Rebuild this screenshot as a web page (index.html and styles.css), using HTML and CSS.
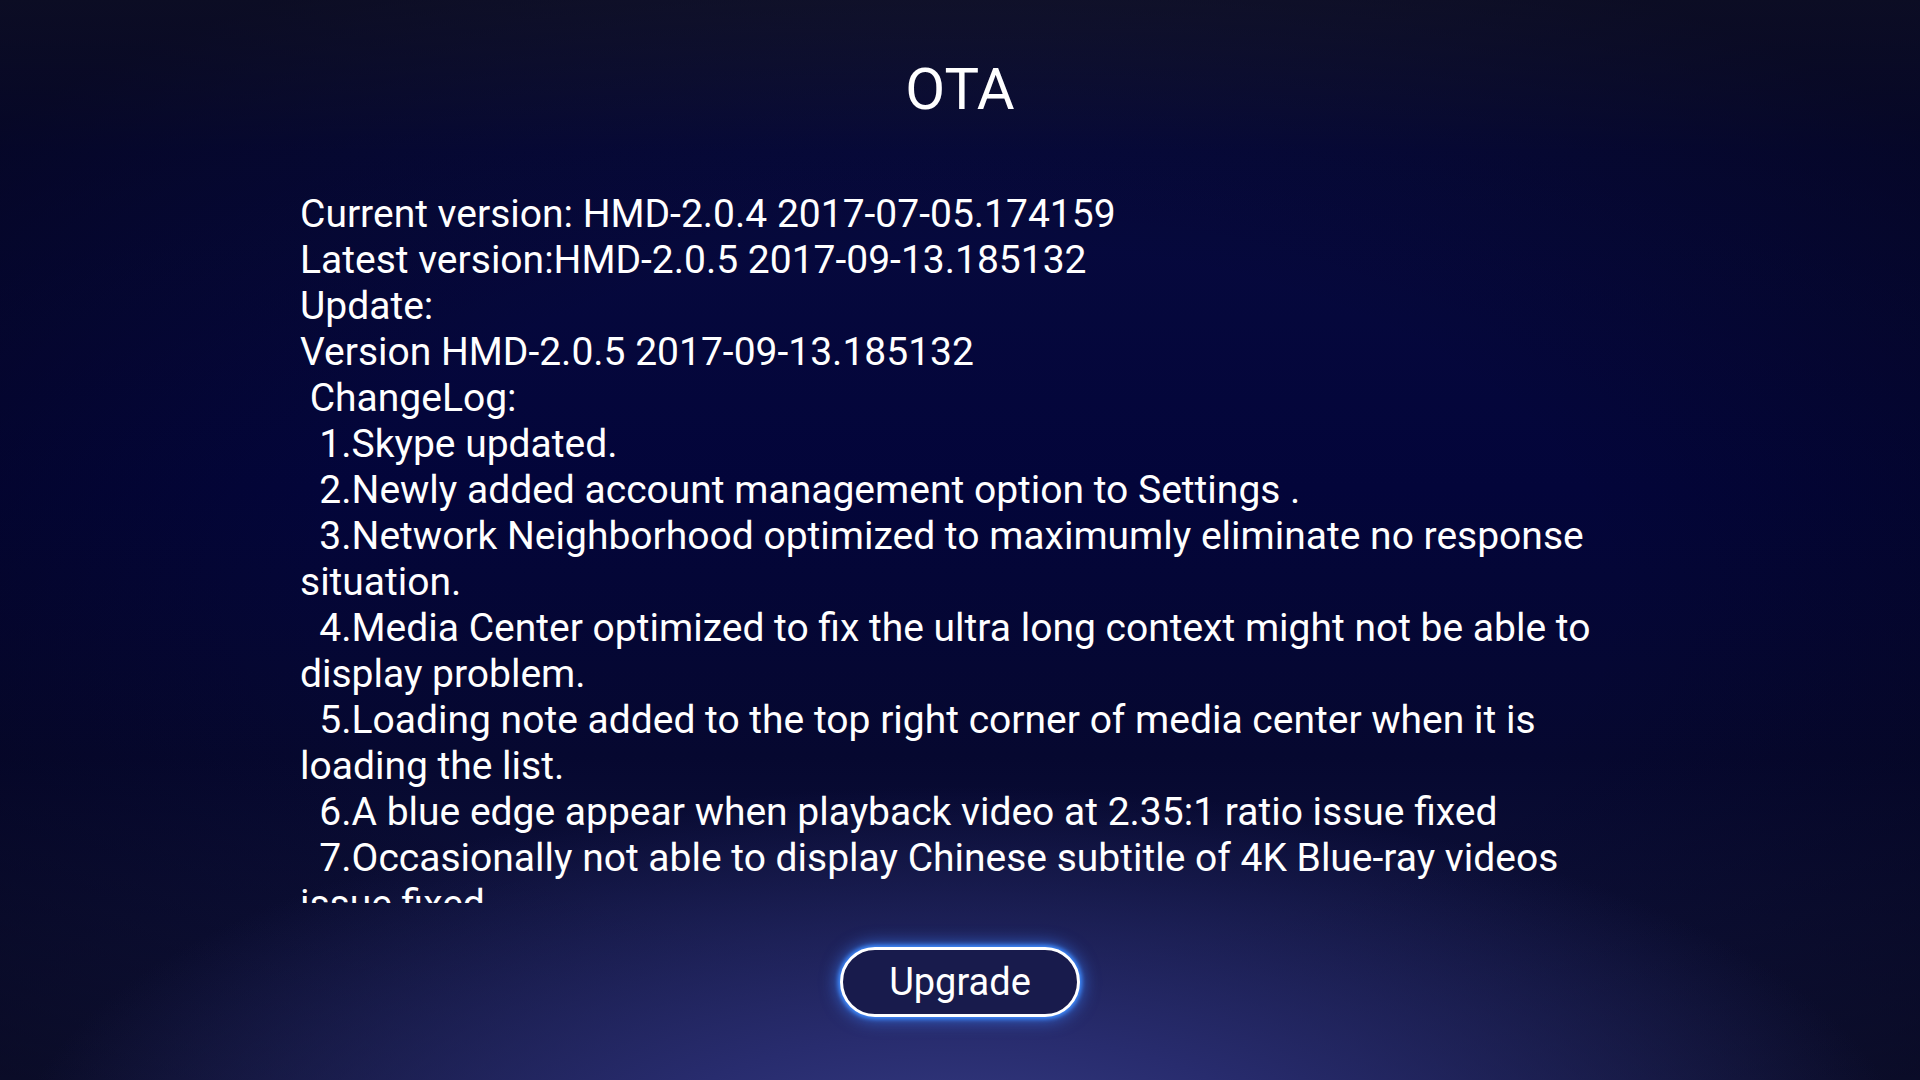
FILE: index.html
```html
<!DOCTYPE html>
<html lang="en">
<head>
  <meta charset="UTF-8" />
  <meta name="viewport" content="width=device-width, initial-scale=1.0" />
  <title>OTA</title>
  <link rel="stylesheet" href="styles.css">
</head>
<body>
  <div class="screen">
    <h1 class="title">OTA</h1>

    <div class="info">
<div class="info-text">Current version: HMD-2.0.4 2017-07-05.174159
Latest version:HMD-2.0.5 2017-09-13.185132
Update:
Version HMD-2.0.5 2017-09-13.185132
 ChangeLog:
  1.Skype updated.
  2.Newly added account management option to Settings .
  3.Network Neighborhood optimized to maximumly eliminate no response situation.
  4.Media Center optimized to fix the ultra long context might not be able to display problem.
  5.Loading note added to the top right corner of media center when it is loading the list.
  6.A blue edge appear when playback video at 2.35:1 ratio issue fixed
  7.Occasionally not able to display Chinese subtitle of 4K Blue-ray videos issue fixed
  8.Some known bugs fixed.</div>
    </div>

    <div class="actions">
      <button class="upgrade">Upgrade</button>
    </div>
  </div>
</body>
</html>
```

FILE: styles.css
```css
html, body {
  margin: 0;
  height: 100%;
}
body {
  font-family: Roboto, "Noto Sans", sans-serif;
  color: #fff;
  background-color: #04063a;
  background-image:
    radial-gradient(ellipse 950px 380px at 50% 108%, #363c84 0%, #282c6e 35%, rgba(20, 22, 80, 0) 100%),
    radial-gradient(ellipse 1300px 700px at 50% 55%, rgba(4, 6, 60, 0) 50%, rgba(4, 4, 24, 0.6) 100%),
    linear-gradient(to bottom, #181a36 0%, #070a3e 14%, #03053a 45%, #060830 70%, #141840 100%);
  overflow: hidden;
}
.screen {
  width: 1920px;
  height: 1080px;
  display: flex;
  flex-direction: column;
  align-items: center;
}
.title {
  margin: 0;
  padding-top: 53px;
  height: 72px;
  line-height: 72px;
  font-size: 58px;
  font-weight: 400;
}
.info {
  margin-top: 66px;
  width: 1320px;
  height: 712px;
  overflow: hidden;
}
.info-text {
  white-space: pre-wrap;
  font-size: 39px;
  line-height: 46px;
}
.actions {
  margin-top: 44px;
}
.upgrade {
  width: 240px;
  height: 70px;
  border: 3px solid #fff;
  border-radius: 35px;
  background: #181b4c;
  color: #fff;
  font-family: Roboto, "Noto Sans", sans-serif;
  font-size: 38px;
  padding: 0;
  box-shadow: 0 0 4px 2px #3f8cff, 0 0 16px 4px rgba(60, 130, 255, 0.6);
  cursor: pointer;
}
```
